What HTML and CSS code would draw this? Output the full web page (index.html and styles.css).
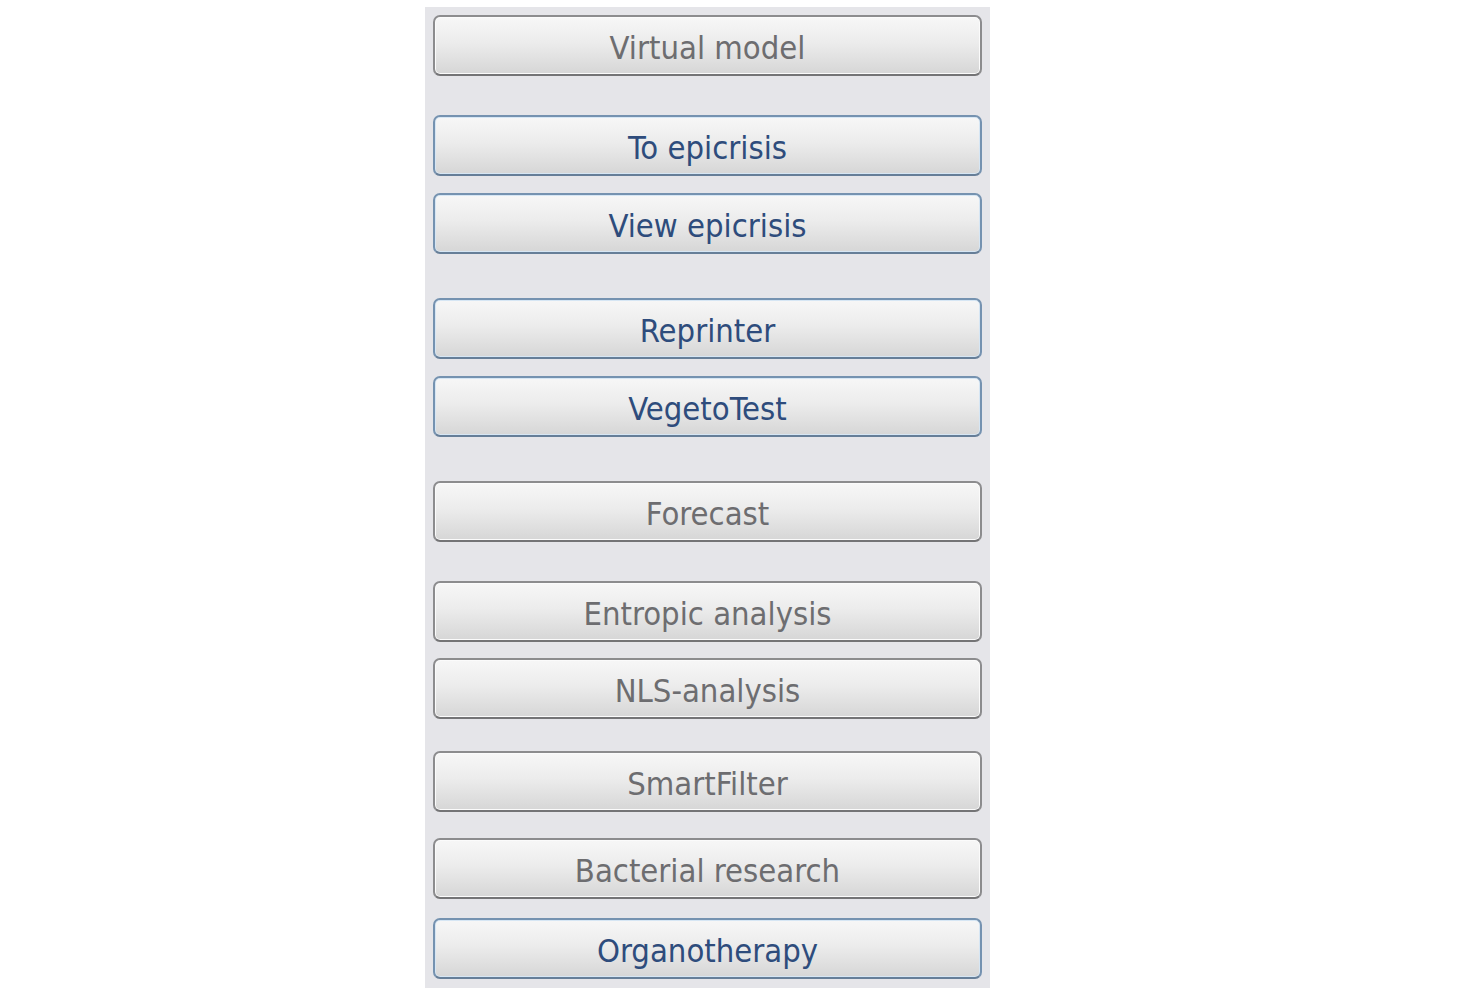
FILE: index.html
```html
<!DOCTYPE html>
<html>
<head>
<meta charset="utf-8">
<link rel="stylesheet" href="styles.css">
</head>
<body>
<div class="panel">
  <button class="btn off">Virtual model</button>
  <button class="btn on g39">To epicrisis</button>
  <button class="btn on g17">View epicrisis</button>
  <button class="btn on g44">Reprinter</button>
  <button class="btn on g17">VegetoTest</button>
  <button class="btn off g44">Forecast</button>
  <button class="btn off g39">Entropic analysis</button>
  <button class="btn off g16">NLS-analysis</button>
  <button class="btn off g32">SmartFilter</button>
  <button class="btn off g26">Bacterial research</button>
  <button class="btn on g19">Organotherapy</button>
</div>
</body>
</html>
```
FILE: styles.css
```css
html, body {
  margin: 0;
  padding: 0;
  background: #ffffff;
}
body {
  padding-top: 7px;
}
.panel {
  margin-left: 425px;
  width: 565px;
  height: 981px;
  box-sizing: border-box;
  background: #e5e5e9;
  padding: 8px 8px 10px 8px;
  display: flex;
  flex-direction: column;
}
.btn {
  display: block;
  width: 549px;
  height: 61px;
  flex: none;
  box-sizing: border-box;
  margin: 0;
  padding: 4px 0 0 0;
  border-radius: 7px;
  font-family: "DejaVu Sans Condensed", "DejaVu Sans", sans-serif;
  font-size: 32.5px;
  text-align: center;
  background: linear-gradient(to bottom, #f7f7f7 0%, #ececec 45%, #d6d6d6 100%);
}
.off {
  color: #6d6d70;
  border: 2px solid #8c8c8e;
  border-bottom-color: #747476;
  box-shadow: inset 0 0 0 1px #fbfbfb;
}
.on {
  color: #2e4c7c;
  border: 2px solid #7592b0;
  border-bottom-color: #667e98;
  box-shadow: inset 0 0 0 1px #d6e6f4;
}
.g39 { margin-top: 39px; }
.g17 { margin-top: 17px; }
.g44 { margin-top: 44px; }
.g16 { margin-top: 16px; }
.g32 { margin-top: 32px; }
.g26 { margin-top: 26px; }
.g19 { margin-top: 19px; }
```
